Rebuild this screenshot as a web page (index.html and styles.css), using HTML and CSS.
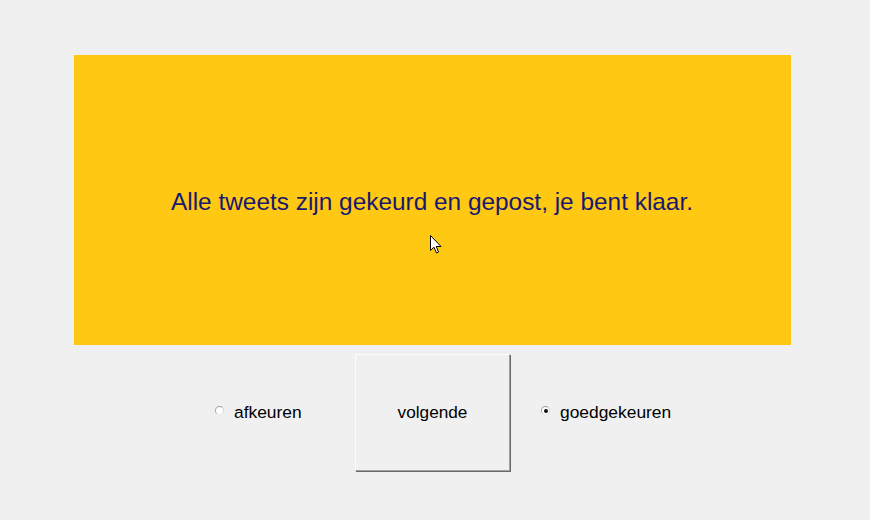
FILE: index.html
```html
<!DOCTYPE html>
<html>
<head>
<meta charset="utf-8">
<link rel="stylesheet" href="styles.css">
</head>
<body>
<div class="panel">
  <p class="message">Alle tweets zijn gekeurd en gepost, je bent klaar.</p>
  <svg class="cursor" width="12" height="19" viewBox="0 0 12 19"><path d="M0.5 0.5 L0.5 15.5 L4 12.2 L6.5 18 L8.6 17 L6.2 11.5 L11 11.5 Z" fill="#fff" stroke="#000" stroke-width="1" stroke-linejoin="miter"/></svg>
</div>
<div class="controls">
  <label class="option opt-left"><span class="radio"></span>afkeuren</label>
  <button class="next">volgende</button>
  <label class="option opt-right"><span class="radio checked"></span>goedgekeuren</label>
</div>
</body>
</html>
```
FILE: styles.css
```css
html, body {
  margin: 0;
  padding: 0;
  background: #f0f0f0;
  font-family: "Liberation Sans", Arial, sans-serif;
}
body {
  width: 870px;
  height: 520px;
  overflow: hidden;
}
.panel {
  position: relative;
  margin: 55px 0 0 74px;
  width: 717px;
  height: 290px;
  background: #fec813;
  display: flex;
  align-items: center;
  justify-content: center;
}
.message {
  margin: 3px 0 0 0;
  font-size: 24.4px;
  color: #191970;
  padding-right: 1px;
}
.cursor {
  position: absolute;
  left: 356px;
  top: 180px;
}
.controls {
  display: flex;
  align-items: center;
  margin: 9px 0 0 215px;
}
.option {
  display: flex;
  align-items: center;
  font-size: 17.4px;
  color: #000;
  margin-top: 0;
}
.opt-left {
  width: 140px;
}
.opt-right {
  margin-left: 30px;
}
.radio {
  width: 9px;
  height: 9px;
  border-radius: 50%;
  border: 1px solid;
  border-color: #9c9c9c #d8d8d8 #e8e8e8 #a8a8a8;
  background: #fff;
  box-sizing: border-box;
  margin-right: 10px;
  position: relative;
  top: -2px;
}
.radio.checked::after {
  content: "";
  position: absolute;
  left: 1.5px;
  top: 1.5px;
  width: 4px;
  height: 4px;
  border-radius: 50%;
  background: #111;
}
.next {
  width: 155px;
  height: 117px;
  margin-right: 1px;
  box-sizing: border-box;
  background: #f0f0f0;
  border-style: solid;
  border-width: 1px;
  border-color: #fcfcfc #a0a0a0 #a0a0a0 #fcfcfc;
  box-shadow: 1px 1px 0 #696969;
  font-family: "Liberation Sans", Arial, sans-serif;
  font-size: 17.2px;
  color: #000;
  padding: 0;
}
```
